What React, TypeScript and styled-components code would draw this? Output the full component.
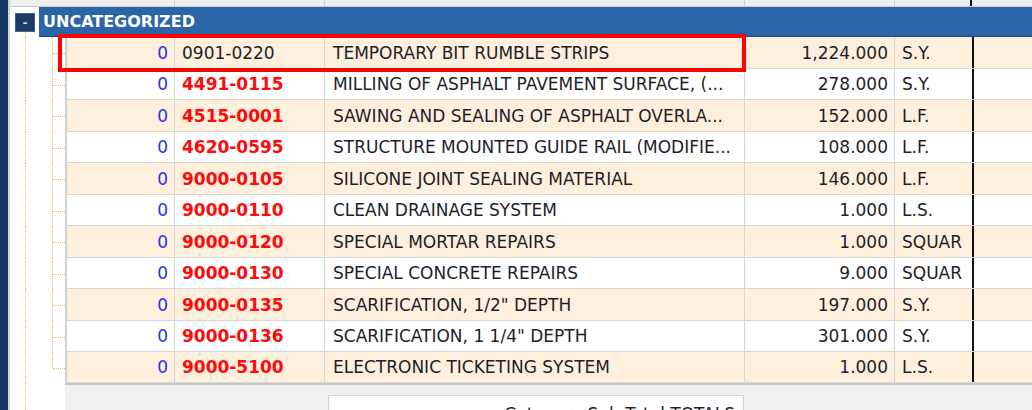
import React from "react";
import styled, { createGlobalStyle, css } from "styled-components";

const Global = createGlobalStyle`
  html, body { margin: 0; padding: 0; background: #ffffff; overflow: hidden; }
  body { font-family: "DejaVu Sans", "Liberation Sans", sans-serif; }
`;

const DOT = "#f5bc5c";
const GRID = "#d6d6d6";

const Page = styled.div`
  display: flex;
  width: 1032px;
  height: 410px;
  overflow: hidden;
  position: relative;
`;

const LeftBar = styled.div`
  width: 8px;
  flex: none;
  background: #16365d;
  border-right: 2px solid #cfd4da;
`;

const Main = styled.div`
  flex: 1;
  display: flex;
  flex-direction: column;
  min-width: 0;
  min-height: 0;
`;

const HeaderStrip = styled.div`
  flex: none;
  display: grid;
  grid-template-columns: 165px 150px 420px 150px 77px 1fr;
  height: 6px;
  background: #f0f0f0;
  border-bottom: 1px solid #c9c9c9;
`;

const HeaderCell = styled.div<{ $black?: boolean }>`
  border-right: 1px solid #d2d2d2;
  ${(p) =>
    p.$black &&
    css`
      border-right: 2px solid #111;
    `}
`;

const GroupRow = styled.div`
  flex: none;
  display: flex;
  height: 30px;
`;

const GroupTree = styled.div`
  width: 29px;
  flex: none;
  position: relative;
  background: #fff;
  &::after {
    content: "";
    position: absolute;
    left: 15px;
    top: 25px;
    bottom: 0;
    border-left: 1px dotted ${DOT};
  }
`;

const Toggle = styled.div`
  position: absolute;
  left: 5px;
  top: 6px;
  width: 18px;
  height: 17px;
  background: #1c3b66;
  border: 1px solid #3d5f8a;
  display: flex;
  align-items: center;
  justify-content: center;
  color: #e8eef6;
  font: bold 11px "DejaVu Sans", sans-serif;
  line-height: 1;
`;

const GroupBar = styled.div`
  flex: 1;
  background: #2c64a8;
  border-bottom: 1px solid #1d4677;
  display: flex;
  align-items: center;
  padding-left: 4px;
  color: #ffffff;
  font: bold 16px "DejaVu Sans", sans-serif;
`;

const Row = styled.div<{ $h: number }>`
  flex: none;
  display: flex;
  height: ${(p) => p.$h}px;
`;

const TreeCell = styled.div<{ $last?: boolean }>`
  width: 55px;
  flex: none;
  position: relative;
  background: #fff;
  &::before {
    content: "";
    position: absolute;
    left: 15px;
    top: 0;
    bottom: 0;
    border-left: 1px dotted ${DOT};
  }
  &::after {
    content: "";
    position: absolute;
    left: 42px;
    top: 0;
    height: ${(p) => (p.$last ? "50%" : "100%")};
    border-left: 1px dotted ${DOT};
  }
`;

const Branch = styled.span`
  position: absolute;
  left: 43px;
  right: 0;
  top: 50%;
  border-top: 1px dotted ${DOT};
`;

const Cells = styled.div<{ $alt: boolean }>`
  flex: 1;
  display: grid;
  grid-template-columns: 108px 150px 420px 150px 77px 1fr;
  background: ${(p) => (p.$alt ? "#fef0dc" : "#ffffff")};
  border-left: 2px solid #d0d0d0;
  border-bottom: 1px solid ${GRID};
  font-size: 17px;
  color: #1e1e2a;
`;

const Cell = styled.div<{ $align?: "left" | "right"; $pad?: number; $noBorder?: boolean }>`
  display: flex;
  align-items: center;
  justify-content: ${(p) => (p.$align === "right" ? "flex-end" : "flex-start")};
  padding: ${(p) => (p.$align === "right" ? `0 ${p.$pad ?? 6}px 0 0` : `0 0 0 ${p.$pad ?? 7}px`)};
  border-right: ${(p) => (p.$noBorder ? "none" : `1px solid ${GRID}`)};
  white-space: nowrap;
  overflow: hidden;
  min-width: 0;
`;

const Count = styled(Cell)`
  color: #2f2fee;
`;

const Code = styled(Cell)<{ $flag: boolean }>`
  ${(p) =>
    p.$flag
      ? css`
          color: #ff0a0a;
          font-weight: bold;
        `
      : css`
          color: #1e1e2a;
        `}
`;

const Spare = styled.div`
  border-left: 2px solid #111;
`;

const Footer = styled.div`
  flex: 1;
  display: flex;
  min-height: 0;
`;

const FooterTree = styled.div`
  width: 55px;
  flex: none;
  position: relative;
  background: #fff;
  &::before {
    content: "";
    position: absolute;
    left: 15px;
    top: 0;
    bottom: 0;
    border-left: 1px dotted ${DOT};
  }
`;

const FooterArea = styled.div`
  flex: 1;
  background: #f0f0f0;
  border-top: 2px solid #c9c9c9;
  padding: 10px 0 0 263px;
`;

const TotalsBox = styled.div`
  width: 416px;
  height: 30px;
  background: #ffffff;
  border: 1px solid #d4d4d4;
  text-align: right;
  padding: 8px 8px 0 0;
  box-sizing: border-box;
  font-size: 17px;
  color: #1e1e2a;
  white-space: nowrap;
`;

const Highlight = styled.div`
  position: absolute;
  left: 58px;
  top: 34px;
  width: 680px;
  height: 30px;
  border: 4px solid #ff0000;
  pointer-events: none;
`;

type Item = { code: string; desc: string; qty: string; unit: string; flag: boolean };

const items: Item[] = [
  { code: "0901-0220", desc: "TEMPORARY BIT RUMBLE STRIPS", qty: "1,224.000", unit: "S.Y.", flag: false },
  { code: "4491-0115", desc: "MILLING OF ASPHALT PAVEMENT SURFACE, (...", qty: "278.000", unit: "S.Y.", flag: true },
  { code: "4515-0001", desc: "SAWING AND SEALING OF ASPHALT OVERLA...", qty: "152.000", unit: "L.F.", flag: true },
  { code: "4620-0595", desc: "STRUCTURE MOUNTED GUIDE RAIL (MODIFIE...", qty: "108.000", unit: "L.F.", flag: true },
  { code: "9000-0105", desc: "SILICONE JOINT SEALING MATERIAL", qty: "146.000", unit: "L.F.", flag: true },
  { code: "9000-0110", desc: "CLEAN DRAINAGE SYSTEM", qty: "1.000", unit: "L.S.", flag: true },
  { code: "9000-0120", desc: "SPECIAL MORTAR REPAIRS", qty: "1.000", unit: "SQUAR", flag: true },
  { code: "9000-0130", desc: "SPECIAL CONCRETE REPAIRS", qty: "9.000", unit: "SQUAR", flag: true },
  { code: "9000-0135", desc: "SCARIFICATION, 1/2\" DEPTH", qty: "197.000", unit: "S.Y.", flag: true },
  { code: "9000-0136", desc: "SCARIFICATION, 1 1/4\" DEPTH", qty: "301.000", unit: "S.Y.", flag: true },
  { code: "9000-5100", desc: "ELECTRONIC TICKETING SYSTEM", qty: "1.000", unit: "L.S.", flag: true },
];

const heights = [32, 31, 32, 31, 32, 31, 32, 31, 32, 31, 31];

export default function App() {
  return (
    <>
      <Global />
      <Page>
        <LeftBar />
        <Main>
          <HeaderStrip>
            <HeaderCell />
            <HeaderCell />
            <HeaderCell />
            <HeaderCell />
            <HeaderCell $black />
            <div />
          </HeaderStrip>
          <GroupRow>
            <GroupTree>
              <Toggle>-</Toggle>
            </GroupTree>
            <GroupBar>UNCATEGORIZED</GroupBar>
          </GroupRow>
          {items.map((it, i) => (
            <Row key={it.code} $h={heights[i]}>
              <TreeCell $last={i === items.length - 1}>
                <Branch />
              </TreeCell>
              <Cells $alt={i % 2 === 0}>
                <Count $align="right" $pad={6}>0</Count>
                <Code $flag={it.flag} $pad={7}>{it.code}</Code>
                <Cell $pad={8}>{it.desc}</Cell>
                <Cell $align="right" $pad={6}>{it.qty}</Cell>
                <Cell $pad={7} $noBorder>{it.unit}</Cell>
                <Spare />
              </Cells>
            </Row>
          ))}
          <Footer>
            <FooterTree />
            <FooterArea>
              <TotalsBox>Category Sub Total TOTALS</TotalsBox>
            </FooterArea>
          </Footer>
        </Main>
        <Highlight />
      </Page>
    </>
  );
}
